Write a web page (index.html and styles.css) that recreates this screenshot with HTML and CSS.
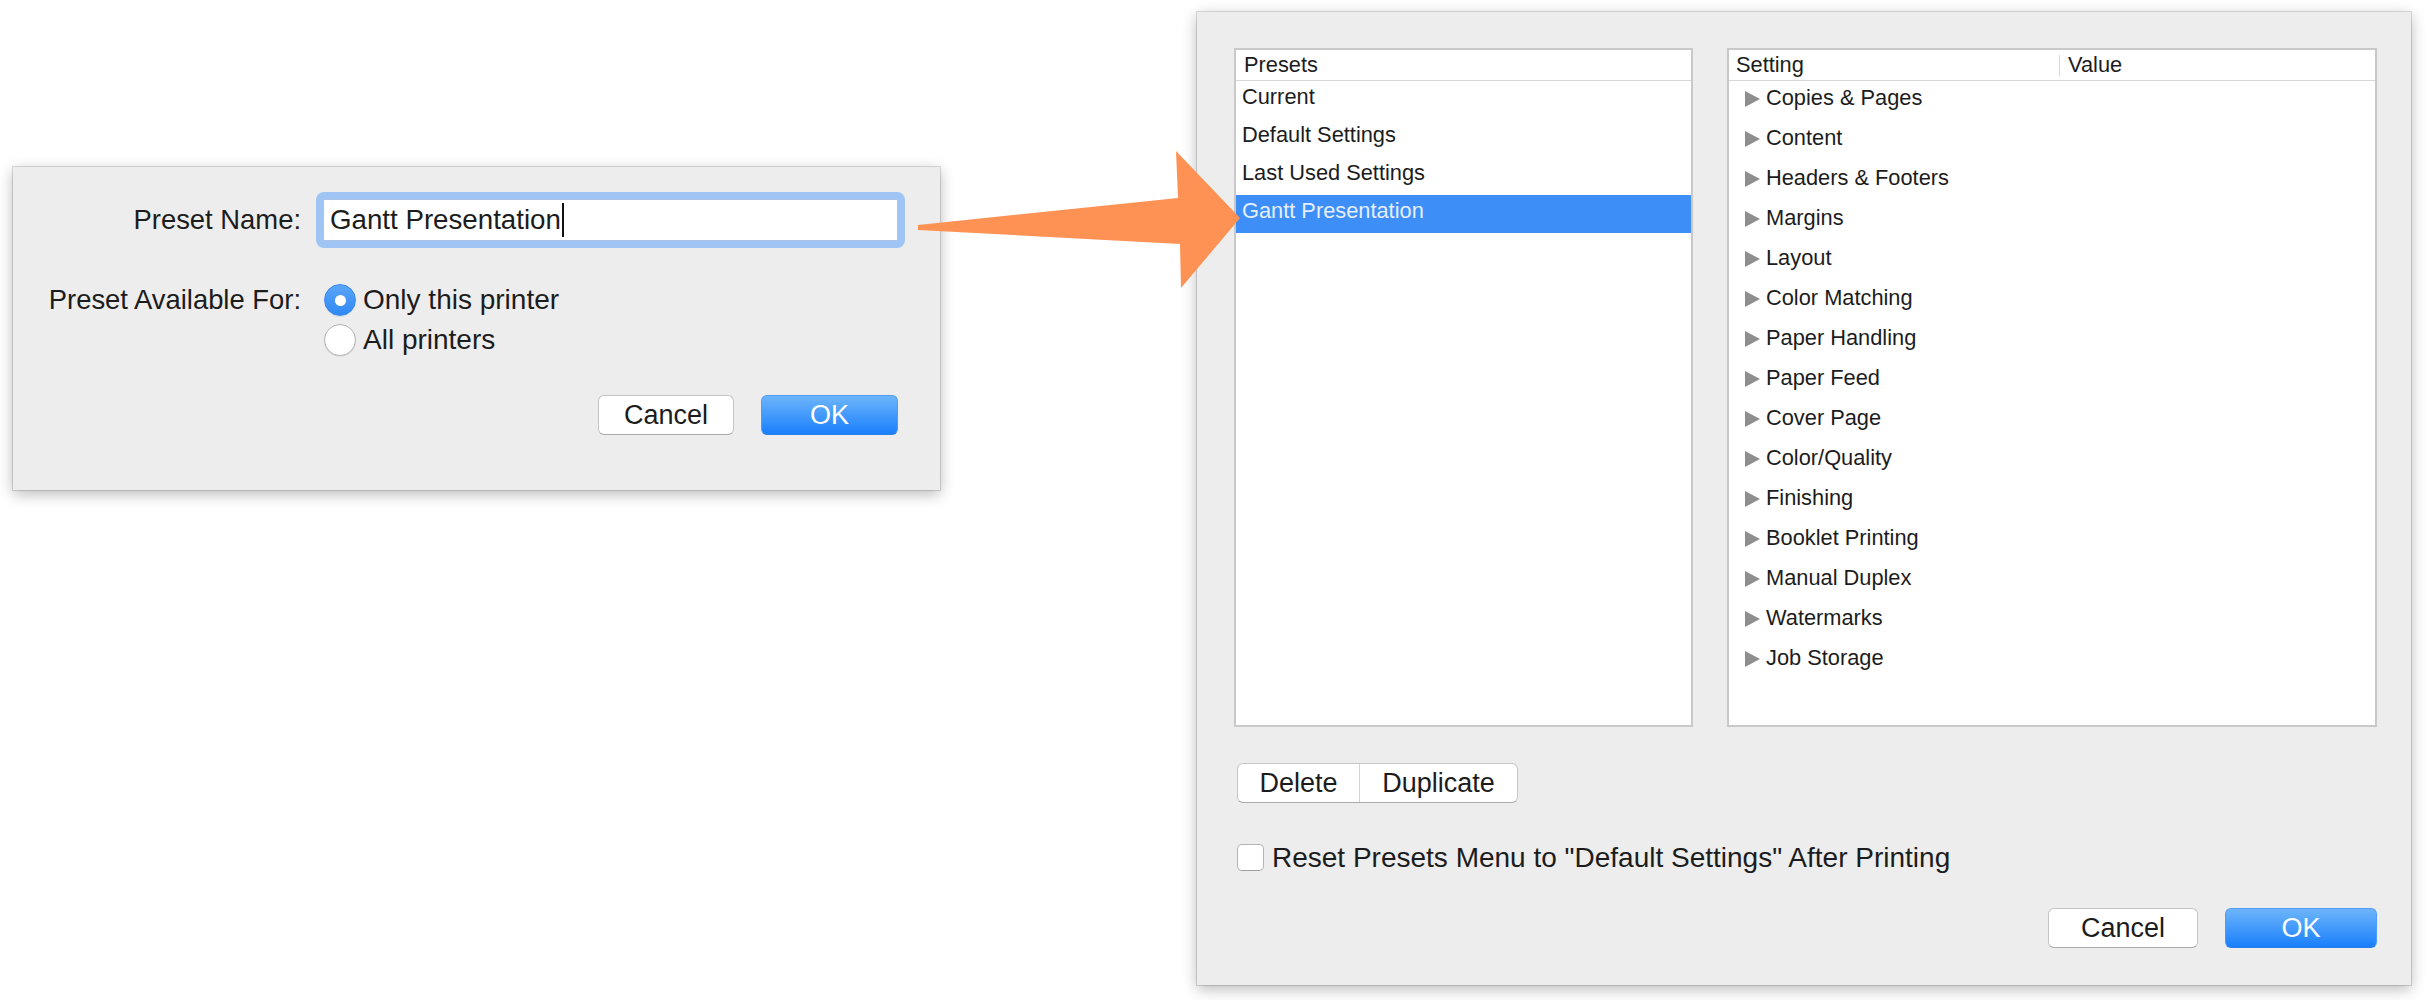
FILE: index.html
```html
<!DOCTYPE html>
<html lang="en">
<head>
    <meta charset="UTF-8">
    <title>Presets</title>
    <link rel="stylesheet" href="styles.css">
</head>
<body>
<div class="stage">
    <!-- save preset sheet -->
    <div class="sheet small">
        <div class="form">
            <div class="label name-label">Preset Name:</div>
            <div class="ring"><div class="field">Gantt Presentation<span class="caret"></span></div></div>

            <div class="label avail-label">Preset Available For:</div>
            <div class="radios">
                <div class="opt"><span class="radio on"></span>Only this printer</div>
                <div class="opt"><span class="radio"></span>All printers</div>
            </div>
        </div>
        <div class="actions">
            <div class="btn">Cancel</div>
            <div class="btn primary">OK</div>
        </div>
    </div>

    <!-- presets manager -->
    <div class="sheet large">
        <div class="lists">
            <div class="list presets">
                <div class="head">Presets</div>
                <div class="prow">Current</div>
                <div class="prow">Default Settings</div>
                <div class="prow">Last Used Settings</div>
                <div class="prow sel">Gantt Presentation</div>
            </div>
            <div class="list settings">
                <div class="head cols">
                    <span class="h-setting">Setting</span>
                    <span class="sep"></span>
                    <span class="h-value">Value</span>
                </div>
                <div class="srow"><svg class="tri" viewBox="0 0 15 16"><polygon points="0,0 15,8 0,16"/></svg><span>Copies &amp; Pages</span></div>
                <div class="srow"><svg class="tri" viewBox="0 0 15 16"><polygon points="0,0 15,8 0,16"/></svg><span>Content</span></div>
                <div class="srow"><svg class="tri" viewBox="0 0 15 16"><polygon points="0,0 15,8 0,16"/></svg><span>Headers &amp; Footers</span></div>
                <div class="srow"><svg class="tri" viewBox="0 0 15 16"><polygon points="0,0 15,8 0,16"/></svg><span>Margins</span></div>
                <div class="srow"><svg class="tri" viewBox="0 0 15 16"><polygon points="0,0 15,8 0,16"/></svg><span>Layout</span></div>
                <div class="srow"><svg class="tri" viewBox="0 0 15 16"><polygon points="0,0 15,8 0,16"/></svg><span>Color Matching</span></div>
                <div class="srow"><svg class="tri" viewBox="0 0 15 16"><polygon points="0,0 15,8 0,16"/></svg><span>Paper Handling</span></div>
                <div class="srow"><svg class="tri" viewBox="0 0 15 16"><polygon points="0,0 15,8 0,16"/></svg><span>Paper Feed</span></div>
                <div class="srow"><svg class="tri" viewBox="0 0 15 16"><polygon points="0,0 15,8 0,16"/></svg><span>Cover Page</span></div>
                <div class="srow"><svg class="tri" viewBox="0 0 15 16"><polygon points="0,0 15,8 0,16"/></svg><span>Color/Quality</span></div>
                <div class="srow"><svg class="tri" viewBox="0 0 15 16"><polygon points="0,0 15,8 0,16"/></svg><span>Finishing</span></div>
                <div class="srow"><svg class="tri" viewBox="0 0 15 16"><polygon points="0,0 15,8 0,16"/></svg><span>Booklet Printing</span></div>
                <div class="srow"><svg class="tri" viewBox="0 0 15 16"><polygon points="0,0 15,8 0,16"/></svg><span>Manual Duplex</span></div>
                <div class="srow"><svg class="tri" viewBox="0 0 15 16"><polygon points="0,0 15,8 0,16"/></svg><span>Watermarks</span></div>
                <div class="srow"><svg class="tri" viewBox="0 0 15 16"><polygon points="0,0 15,8 0,16"/></svg><span>Job Storage</span></div>
            </div>
        </div>

        <div class="seg">
            <div class="seg-item del">Delete</div>
            <div class="seg-item dup">Duplicate</div>
        </div>

        <div class="check-row">
            <span class="check"></span>
            <span>Reset Presets Menu to "Default Settings" After Printing</span>
        </div>

        <div class="actions footer">
            <div class="btn wide">Cancel</div>
            <div class="btn primary wide2">OK</div>
        </div>
    </div>

    <!-- callout arrow drawn over both sheets -->
    <svg class="arrow" viewBox="0 0 2428 1000">
        <polygon points="918,225 1178,198 1176,151 1240,218 1181,288 1180,244 918,230"/>
    </svg>
</div>
</body>
</html>
```

FILE: styles.css
```css
*{
    box-sizing: border-box;
}
body{
    margin: 0;
    background: #fff;
    font-family: "Liberation Sans", Arial, sans-serif;
    color: #1c1c1c;
}
.stage{
    position: relative;
    width: 2428px;
    height: 1000px;
    display: flex;
    align-items: flex-start;
}
.sheet{
    background: #ededed;
    box-shadow: 0 0 0 1px rgba(0,0,0,0.13), 0 4px 14px rgba(0,0,0,0.28);
}

/* small sheet */
.small{
    margin: 167px 0 0 13px;
    width: 927px;
    height: 323px;
    padding: 32px 42px 0 0;
    font-size: 27.4px;
}
.form{
    display: grid;
    grid-template-columns: 288px 1fr;
    column-gap: 22px;
    row-gap: 39px;
}
.label{
    text-align: right;
}
.name-label{
    line-height: 42px;
}
.avail-label{
    line-height: 40px;
}
.ring{
    margin: -7px;
    padding: 7px;
    background: #9ec5f3;
    border-radius: 8px;
}
.field{
    height: 42px;
    background: #fff;
    border: 1px solid #a9c4e6;
    padding-left: 6px;
    line-height: 40px;
    display: flex;
    align-items: center;
    font-size: 27.7px;
}
.caret{
    display: inline-block;
    width: 2px;
    height: 34px;
    background: #111;
    margin-left: 1px;
}
.radios{
    display: flex;
    flex-direction: column;
    font-size: 28px;
}
.opt{
    height: 40px;
    display: flex;
    align-items: center;
    margin-left: 1px;
}
.radio{
    width: 32px;
    height: 32px;
    border-radius: 50%;
    background: #fff;
    border: 1px solid #b4b4b4;
    box-shadow: 0 1px 1px rgba(0,0,0,0.08);
    margin-right: 7px;
    display: flex;
    align-items: center;
    justify-content: center;
}
.radio.on{
    background: linear-gradient(#5aa6f9, #2f88f5);
    border-color: #3a8bf0;
}
.radio.on::after{
    content: "";
    width: 11px;
    height: 11px;
    border-radius: 50%;
    background: #fff;
}
.actions{
    display: flex;
    justify-content: flex-end;
    gap: 27px;
    margin-top: 35px;
    font-size: 27px;
}
.btn{
    width: 136px;
    height: 40px;
    background: #fff;
    border: 1px solid #c4c4c4;
    border-bottom-color: #a9a9a9;
    border-radius: 6px;
    text-align: center;
    line-height: 38px;
}
.btn.primary{
    width: 137px;
    color: #fff;
    background: linear-gradient(#6db5fb, #1a7ffb);
    border-color: #4f9cf6;
    border-bottom-color: #2a7ee8;
}

/* large sheet */
.large{
    margin: 12px 0 0 257px;
    width: 1214px;
    height: 973px;
    padding: 36px 34px 37px 37px;
    display: flex;
    flex-direction: column;
}
.lists{
    display: flex;
    gap: 34px;
    height: 679px;
    font-size: 21.8px;
}
.list{
    background: #fff;
    border: 2px solid #c9c9c9;
}
.presets{
    width: 459px;
}
.settings{
    width: 650px;
}
.head{
    height: 31px;
    line-height: 30px;
    border-bottom: 1px solid #d6d6d6;
    padding-left: 8px;
}
.cols{
    display: flex;
    align-items: center;
    padding-left: 7px;
}
.h-setting{
    width: 323px;
}
.sep{
    width: 1px;
    height: 21px;
    background: #d8d8d8;
}
.h-value{
    padding-left: 8px;
}
.prow{
    height: 38px;
    line-height: 32px;
    padding-left: 6px;
}
.prow.sel{
    background: #3d8ef7;
    color: #e4eefd;
}
.srow{
    height: 40px;
    display: flex;
    align-items: flex-start;
    padding-left: 16px;
}
.srow span{
    line-height: 34px;
}
.tri{
    width: 15px;
    height: 16px;
    margin: 10px 6px 0 0;
    fill: #8e8e8e;
}
.seg{
    display: flex;
    align-self: flex-start;
    margin: 36px 0 0 3px;
    height: 40px;
    background: #fff;
    border: 1px solid #c6c6c6;
    border-bottom-color: #ababab;
    border-radius: 6px;
    font-size: 27px;
}
.seg-item{
    line-height: 38px;
    text-align: center;
}
.del{
    width: 122px;
    border-right: 1px solid #d4d4d4;
}
.dup{
    width: 157px;
}
.check-row{
    display: flex;
    align-items: center;
    margin: 41px 0 0 3px;
    height: 27px;
    font-size: 28px;
}
.check{
    width: 27px;
    height: 27px;
    background: #fff;
    border: 1px solid #b4b4b4;
    border-bottom-color: #a0a0a0;
    border-radius: 5px;
    margin-right: 8px;
}
.footer{
    margin-top: auto;
    font-size: 27px;
}
.btn.wide{
    width: 150px;
}
.btn.wide2{
    width: 152px;
}

/* callout */
.arrow{
    position: absolute;
    left: 0;
    top: 0;
    width: 2428px;
    height: 1000px;
    fill: #fe9254;
    pointer-events: none;
}
```
